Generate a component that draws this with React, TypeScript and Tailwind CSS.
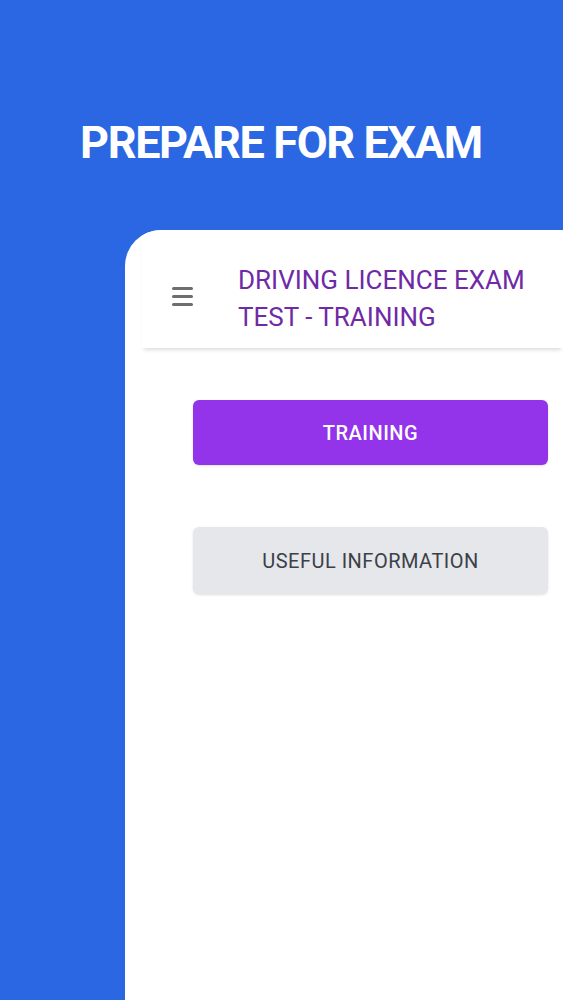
export default function App() {
  return (
    <div className="flex h-[1000px] w-full flex-col overflow-hidden bg-[#2b67e3] font-['Roboto',sans-serif]">
      <h1 className="pt-[113px] pl-[80px] text-[45px] font-bold leading-[60px] tracking-[-1.35px] text-white">
        PREPARE FOR EXAM
      </h1>

      <div className="ml-[125px] mt-[57px] flex-1 overflow-hidden rounded-tl-[36px] bg-white">
        <header className="ml-[17px] flex h-[118px] items-center bg-white pt-[20px] shadow-[0_4px_4px_-2px_rgba(0,0,0,0.14)]">
          <div className="ml-[30px] -mt-[6px] flex w-[66px] flex-col gap-[5px]">
            <span className="block h-[3px] w-[21px] rounded-sm bg-[#6e6e6e]" />
            <span className="block h-[3px] w-[21px] rounded-sm bg-[#6e6e6e]" />
            <span className="block h-[3px] w-[21px] rounded-sm bg-[#6e6e6e]" />
          </div>
          <h2 className="text-[26px] leading-[37px] text-[#6f2aa5]">
            DRIVING LICENCE EXAM
            <br />
            TEST - TRAINING
          </h2>
        </header>

        <div className="ml-[68px] mr-[15px] mt-[52px] flex flex-col gap-[62px]">
          <button
            type="button"
            className="h-[65px] rounded-md bg-[#9333ea] text-[20px] font-medium tracking-wide text-white shadow-sm"
          >
            TRAINING
          </button>
          <button
            type="button"
            className="h-[67px] rounded-md bg-[#e5e7eb] text-[20px] tracking-wide text-[#3c4048] shadow-sm"
          >
            USEFUL INFORMATION
          </button>
        </div>
      </div>
    </div>
  );
}
